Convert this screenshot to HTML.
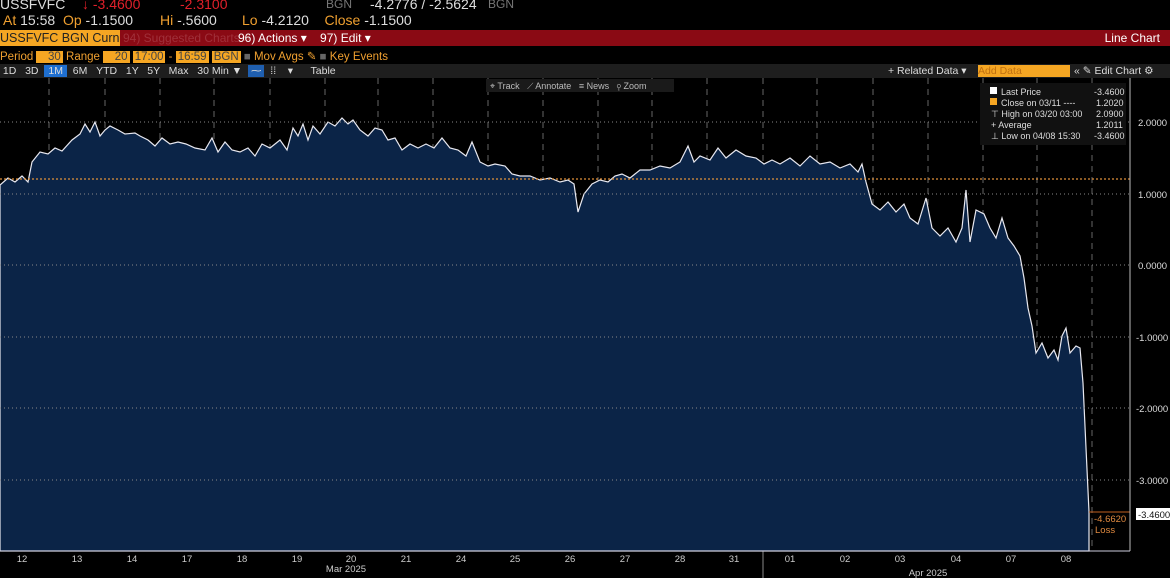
<!DOCTYPE html>
<html><head><meta charset="utf-8"><style>
body{margin:0;width:1170px;height:578px;background:#000;overflow:hidden;font-family:"Liberation Sans",sans-serif;position:relative}
.a{position:absolute;white-space:nowrap}
</style></head><body>
<div class="a" style="left:0;top:-4px;font-size:14px;color:#ddd">USSFVFC</div>
<div class="a" style="left:82px;top:-4px;font-size:14px;color:#e0202a">↓ -3.4600</div>
<div class="a" style="left:180px;top:-4px;font-size:14px;color:#e0202a">-2.3100</div>
<div class="a" style="left:326px;top:-3px;font-size:12px;color:#777">BGN</div>
<div class="a" style="left:370px;top:-4px;font-size:14px;color:#ddd">-4.2776 / -2.5624</div>
<div class="a" style="left:488px;top:-3px;font-size:12px;color:#777">BGN</div>
<div class="a" style="left:3px;top:12px;font-size:14px;color:#f0a030">At <span style="color:#ddd">15:58</span> &nbsp;Op <span style="color:#ddd">-1.1500</span></div>
<div class="a" style="left:160px;top:12px;font-size:14px;color:#f0a030">Hi <span style="color:#ddd">-.5600</span></div>
<div class="a" style="left:242px;top:12px;font-size:14px;color:#f0a030">Lo <span style="color:#ddd">-4.2120</span> &nbsp;&nbsp;&nbsp;Close <span style="color:#ddd">-1.1500</span></div>
<div class="a" style="left:0;top:30px;width:1170px;height:16px;background:#8a0a14"></div>
<div class="a" style="left:0;top:30px;height:16px;width:120px;background:#f5a623;color:#222;font-size:12.5px;line-height:16px;overflow:hidden">USSFVFC BGN Curnc</div>
<div class="a" style="left:123px;top:30px;font-size:12px;line-height:16px;color:#a0303a">94) Suggested Charts »</div>
<div class="a" style="left:238px;top:30px;font-size:12px;line-height:16px;color:#fff">96) Actions ▾ &nbsp;&nbsp;&nbsp;97) Edit ▾</div>
<div class="a" style="right:10px;top:30px;font-size:12px;line-height:16px;color:#fff">Line Chart</div>
<div class="a" style="left:0;top:50px;font-size:11.5px;color:#f0a030;line-height:14px">Period <span style="background:#f5a623;color:#444;padding:0 2px">&nbsp;&nbsp;&nbsp;30</span> Range <span style="background:#f5a623;color:#444;padding:0 2px">&nbsp;&nbsp;&nbsp;20</span> <span style="background:#f5a623;color:#444;padding:0 2px">17:00</span> - <span style="background:#f5a623;color:#444;padding:0 2px">16:59</span> <span style="background:#f5a623;color:#444;padding:0 2px">BGN</span> <span style="color:#666">■</span> Mov Avgs ✎ <span style="color:#666">■</span> Key Events</div>
<div class="a" style="left:0;top:64px;width:1170px;height:14px;background:#1e1e1e"></div>
<div class="a" style="left:0;top:64px;font-size:10.5px;color:#ddd;line-height:14px">&nbsp;1D &nbsp;&nbsp;3D &nbsp;<span style="background:#1f6fd0;padding:0 4px">1M</span> &nbsp;6M &nbsp;&nbsp;YTD &nbsp;&nbsp;1Y &nbsp;&nbsp;5Y &nbsp;&nbsp;Max &nbsp;&nbsp;30 Min ▼ &nbsp;<span style="background:#1f5fb0;padding:0 3px">⁓</span> &nbsp;⁞⁞ &nbsp;&nbsp;&nbsp;▾ &nbsp;&nbsp;&nbsp;&nbsp;&nbsp;Table</div>
<div class="a" style="left:888px;top:64px;font-size:10.5px;color:#ddd;line-height:14px">+ Related Data ▾</div>
<div class="a" style="left:978px;top:65px;width:92px;height:12px;background:#f5a623;color:#c07010;font-size:10.5px;line-height:12px">Add Data</div>
<div class="a" style="left:1074px;top:64px;font-size:10.5px;color:#ddd;line-height:14px">« ✎ Edit Chart ⚙</div>
<svg class="a" style="left:0;top:78px" width="1170" height="500">
<g stroke="#666" stroke-dasharray="6,5" stroke-width="1">
<line x1="49" y1="0" x2="49" y2="473"/><line x1="105" y1="0" x2="105" y2="473"/><line x1="160" y1="0" x2="160" y2="473"/><line x1="214" y1="0" x2="214" y2="473"/><line x1="270" y1="0" x2="270" y2="473"/><line x1="325" y1="0" x2="325" y2="473"/><line x1="378" y1="0" x2="378" y2="473"/><line x1="433" y1="0" x2="433" y2="473"/><line x1="488" y1="0" x2="488" y2="473"/><line x1="543" y1="0" x2="543" y2="473"/><line x1="598" y1="0" x2="598" y2="473"/><line x1="652" y1="0" x2="652" y2="473"/><line x1="707" y1="0" x2="707" y2="473"/><line x1="763" y1="0" x2="763" y2="473"/><line x1="817" y1="0" x2="817" y2="473"/><line x1="873" y1="0" x2="873" y2="473"/><line x1="928" y1="0" x2="928" y2="473"/><line x1="983" y1="0" x2="983" y2="473"/><line x1="1037" y1="0" x2="1037" y2="473"/><line x1="1092" y1="0" x2="1092" y2="473"/>
</g>
<line x1="763" y1="473" x2="763" y2="500" stroke="#888"/>
<path fill="#0b2447" stroke="#e8e8f0" stroke-width="1.2" d="M0,107 L8,100 L15,104 L22,98 L28,104 L32,84 L40,74 L48,76 L55,70 L62,73 L72,62 L80,56 L85,46 L90,54 L95,44 L100,58 L105,52 L110,48 L118,52 L125,56 L135,55 L140,58 L148,62 L155,68 L162,60 L170,66 L178,64 L186,66 L195,70 L205,72 L212,60 L218,74 L225,64 L232,72 L240,74 L248,70 L255,78 L262,66 L270,70 L280,62 L287,72 L293,50 L298,58 L303,46 L308,62 L313,48 L320,56 L328,44 L335,48 L342,40 L348,46 L353,42 L360,52 L368,58 L375,50 L382,52 L388,62 L395,60 L402,72 L410,66 L418,70 L426,66 L434,70 L442,60 L450,70 L458,72 L466,78 L472,64 L480,84 L488,88 L495,86 L505,88 L512,96 L520,98 L530,98 L540,102 L550,100 L560,104 L568,102 L574,106 L578,134 L584,116 L592,106 L600,102 L608,104 L615,98 L622,96 L630,100 L640,92 L650,92 L660,88 L670,90 L680,84 L688,68 L694,84 L700,78 L710,82 L718,70 L726,80 L736,72 L746,78 L756,80 L764,86 L772,82 L780,86 L790,80 L800,88 L810,78 L820,86 L830,84 L840,90 L850,86 L858,94 L862,86 L866,104 L872,126 L880,132 L888,124 L896,134 L904,126 L910,140 L918,146 L926,120 L932,150 L940,158 L948,150 L956,164 L962,150 L966,112 L970,164 L976,132 L984,136 L990,150 L996,160 L1002,140 L1008,160 L1014,168 L1020,178 L1024,200 L1028,230 L1032,248 L1036,275 L1042,265 L1048,280 L1054,272 L1058,282 L1062,258 L1066,250 L1070,275 L1076,268 L1080,270 L1083,305 L1086,370 L1089,434 L1089,473 L0,473 Z"/>
<g stroke="#888" stroke-dasharray="1,3" stroke-width="1">
<line x1="0" y1="44" x2="1130" y2="44"/><line x1="0" y1="116" x2="1130" y2="116"/><line x1="0" y1="187" x2="1130" y2="187"/><line x1="0" y1="259" x2="1130" y2="259"/><line x1="0" y1="330" x2="1130" y2="330"/><line x1="0" y1="402" x2="1130" y2="402"/>
</g>
<line x1="0" y1="101" x2="1130" y2="101" stroke="#e0903a" stroke-dasharray="2,2" stroke-width="1.2"/>
<line x1="1089" y1="434" x2="1130" y2="434" stroke="#c06020"/>
<line x1="1130" y1="0" x2="1130" y2="473" stroke="#bbb"/>
<line x1="0" y1="473" x2="1130" y2="473" stroke="#ccd"/>
<g fill="#ddd" font-size="9.5" font-family="Liberation Sans,sans-serif">
<text x="1138" y="48">2.0000</text><text x="1138" y="120">1.0000</text><text x="1138" y="191">0.0000</text><text x="1136" y="263">-1.0000</text><text x="1136" y="334">-2.0000</text><text x="1136" y="406">-3.0000</text>
<text x="1094" y="444" fill="#e08a40">-4.6620</text><text x="1095" y="455" fill="#e08a40">Loss</text>
</g>
<rect x="1136" y="430" width="34" height="12" fill="#fff"/><text x="1138" y="440" font-size="9.5" fill="#111" font-family="Liberation Sans,sans-serif">-3.4600</text>
<g fill="#ccc" font-size="9.5" font-family="Liberation Sans,sans-serif" text-anchor="middle">
<text x="22" y="484">12</text><text x="77" y="484">13</text><text x="132" y="484">14</text><text x="187" y="484">17</text><text x="242" y="484">18</text><text x="297" y="484">19</text><text x="351" y="484">20</text><text x="406" y="484">21</text><text x="461" y="484">24</text><text x="515" y="484">25</text><text x="570" y="484">26</text><text x="625" y="484">27</text><text x="680" y="484">28</text><text x="734" y="484">31</text><text x="790" y="484">01</text><text x="845" y="484">02</text><text x="900" y="484">03</text><text x="956" y="484">04</text><text x="1011" y="484">07</text><text x="1066" y="484">08</text>
<text x="346" y="494">Mar 2025</text><text x="928" y="498">Apr 2025</text>
</g>
<rect x="486" y="1" width="188" height="13" fill="#1a1a1a"/>
<text x="490" y="11" font-size="9" fill="#bbb" font-family="Liberation Sans,sans-serif">⌖ Track &nbsp; ⟋ Annotate &nbsp; ≡ News &nbsp; ⚲ Zoom</text>
<rect x="980" y="5" width="146" height="62" fill="#111"/>
<g font-size="9" fill="#ddd" font-family="Liberation Sans,sans-serif">
<rect x="990" y="9" width="7" height="7" fill="#fff"/><text x="1001" y="17">Last Price</text><text x="1094" y="17">-3.4600</text>
<rect x="990" y="20" width="7" height="7" fill="#f5a623"/><text x="1001" y="28">Close on 03/11 ----</text><text x="1096" y="28">1.2020</text>
<text x="991" y="39">⊤ High on 03/20 03:00</text><text x="1096" y="39">2.0900</text>
<text x="991" y="50">+ Average</text><text x="1096" y="50">1.2011</text>
<text x="991" y="61">⊥ Low on 04/08 15:30</text><text x="1094" y="61">-3.4600</text>
</g>
</svg>
</body></html>
